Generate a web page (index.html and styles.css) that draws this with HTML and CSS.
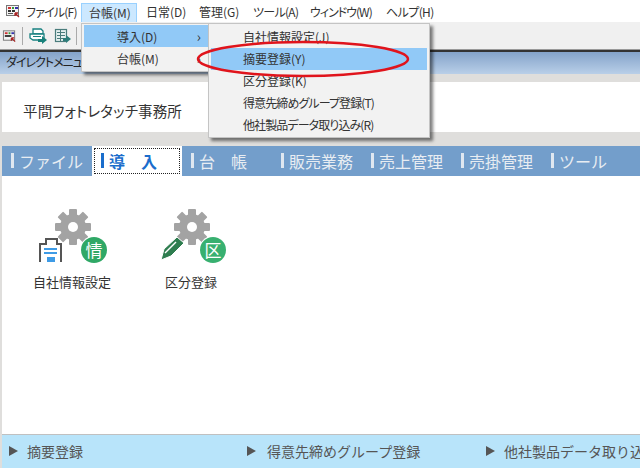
FILE: index.html
```html
<!DOCTYPE html>
<html lang="ja">
<head>
    <meta charset="UTF-8">
    <title>導入</title>
    <link rel="stylesheet" href="styles.css">
</head>
<body>
    <div class="app">
        <!-- Menu bar -->
        <div class="menubar">
            <svg class="app-icon" width="16" height="14" viewBox="0 0 16 14">
                <rect x="1.500" y="1.500" width="12" height="10" fill="#f4f4f4" stroke="#777"/>
                <rect x="3" y="3" width="3" height="2" fill="#c33"/>
                <rect x="7" y="3" width="2" height="2" fill="#393"/>
                <rect x="10" y="3" width="3" height="2" fill="#33a"/>
                <rect x="3" y="6" width="3" height="2" fill="#333"/>
                <rect x="7" y="6" width="3" height="2" fill="#333"/>
                <rect x="3" y="9" width="5" height="1" fill="#555"/>
                <path d="M10 9l4 4M10 9h3M10 9v3" stroke="#a22" stroke-width="1.300" fill="none"/>
            </svg>
            <span class="menu-item m-file">ファイル(F)</span>
            <span class="menu-item m-daicho">台帳(M)</span>
            <span class="menu-item m-nichijo">日常(D)</span>
            <span class="menu-item m-kanri">管理(G)</span>
            <span class="menu-item m-tool">ツール(A)</span>
            <span class="menu-item m-window">ウィンドウ(W)</span>
            <span class="menu-item m-help">ヘルプ(H)</span>
        </div>

        <!-- Toolbar -->
        <div class="toolbar">
            <svg class="tool-icon first" width="15" height="14" viewBox="0 0 16 14">
                <rect x="1.500" y="1.500" width="12" height="10" fill="#f4f4f4" stroke="#777"/>
                <rect x="3" y="3" width="3" height="2" fill="#c33"/>
                <rect x="7" y="3" width="2" height="2" fill="#393"/>
                <rect x="10" y="3" width="3" height="2" fill="#33a"/>
                <rect x="3" y="6" width="7" height="2" fill="#333"/>
                <path d="M10 9l4 4M10 9h3M10 9v3" stroke="#a22" stroke-width="1.300" fill="none"/>
            </svg>
            <span class="tool-sep"></span>
            <svg class="tool-icon second" width="18" height="16" viewBox="0 0 18 16">
                <path d="M4 1h8l2 2v3H4z" fill="#fff" stroke="#178080" stroke-width="1.300"/>
                <path d="M1 6h14v6H4l-3-2z" fill="#fff" stroke="#178080" stroke-width="1.300"/>
                <path d="M4 8.500h8" stroke="#178080"/>
                <path d="M9 11h4V8l5 4-5 4v-2H9z" fill="#17807a"/>
            </svg>
            <svg class="tool-icon third" width="17" height="16" viewBox="0 0 17 16">
                <rect x="1.500" y="1.500" width="11" height="12" fill="#e4efef" stroke="#4a7c7c" stroke-width="1.200"/>
                <path d="M3 4.500h8M3 7.500h8M3 10.500h8M6.500 2v11" stroke="#4a7c7c"/>
                <path d="M9 10h3V7l5 4-5 4v-2H9z" fill="#2d7d7a"/>
            </svg>
            <span class="tool-sep"></span>
        </div>

        <div class="direct-bar">ダイレクトメニュー</div>

        <div class="company">平間フォトレタッチ事務所</div>

        <!-- Tabs -->
        <div class="tabs">
            <span class="tab">ファイル</span>
            <span class="tab active">導　入</span>
            <span class="tab">台　帳</span>
            <span class="tab">販売業務</span>
            <span class="tab">売上管理</span>
            <span class="tab">売掛管理</span>
            <span class="tab">ツール</span>
        </div>

        <!-- Shortcut icons -->
        <div class="content">
            <div class="shortcut">
                <div class="shortcut-icon">
                    <svg width="84" height="60" viewBox="0 0 84 60">
                        <use href="#gear"/>
                        <path d="M10 57V39h6v-5h11v5h4v18" fill="#fff" stroke="#555" stroke-width="2"/>
                        <path d="M14 44h13M14 48h13" stroke="#3e9be6" stroke-width="2"/>
                        <rect x="17" y="52" width="8" height="5" fill="#3e9be6"/>
                        <circle cx="64" cy="45" r="14" fill="#fff"/>
                        <circle cx="64" cy="45" r="13" fill="#2fa866"/>
                    </svg>
                    <span class="badge">情</span>
                </div>
                <div class="shortcut-label">自社情報設定</div>
            </div>
            <div class="shortcut second">
                <div class="shortcut-icon">
                    <svg width="84" height="60" viewBox="0 0 84 60">
                        <use href="#gear"/>
                        <path d="M12 55l3-11 13-12 7 6-13 13z" fill="#2e7d4f" stroke="#fff"/>
                        <path d="M16 48l11-11" stroke="#fff" stroke-width="1.500" fill="none"/>
                        <circle cx="64" cy="45" r="14" fill="#fff"/>
                        <circle cx="64" cy="45" r="13" fill="#38b070"/>
                    </svg>
                    <span class="badge">区</span>
                </div>
                <div class="shortcut-label">区分登録</div>
            </div>
        </div>

        <!-- Footer links -->
        <div class="footer">
            <div class="foot-link f1"><span class="arrow"></span>摘要登録</div>
            <div class="foot-link f2"><span class="arrow"></span>得意先締めグループ登録</div>
            <div class="foot-link f3"><span class="arrow"></span>他社製品データ取り込み</div>
        </div>
    </div>

    <svg width="0" height="0" class="defs">
        <defs>
            <g id="gear" fill="#a3a3a3">
                <circle cx="43" cy="22" r="13"/>
                <rect x="39" y="4" width="8" height="36" rx="1"/>
                <rect x="39" y="4" width="8" height="36" rx="1" transform="rotate(45 43 22)"/>
                <rect x="39" y="4" width="8" height="36" rx="1" transform="rotate(90 43 22)"/>
                <rect x="39" y="4" width="8" height="36" rx="1" transform="rotate(135 43 22)"/>
                <circle cx="43" cy="22" r="5" fill="#fff"/>
            </g>
        </defs>
    </svg>

    <!-- Open menus -->
    <div class="dropdown first-menu">
        <div class="drop-row selected">導入(D)<span class="chev">&#8250;</span></div>
        <div class="drop-row">台帳(M)<span class="chev">&#8250;</span></div>
    </div>
    <div class="dropdown sub-menu">
        <div class="sub-row">自社情報設定(J)</div>
        <div class="sub-row selected">摘要登録(Y)</div>
        <div class="sub-row">区分登録(K)</div>
        <div class="sub-row tight">得意先締めグループ登録(T)</div>
        <div class="sub-row tight">他社製品データ取り込み(R)</div>
    </div>
    <svg class="red-ring" width="216" height="40" viewBox="0 0 216 40">
        <ellipse cx="108" cy="20" rx="105" ry="17" fill="none" stroke="#e0141c" stroke-width="2.500"/>
    </svg>
</body>
</html>
```

FILE: styles.css
```css
html, body {
    margin: 0;
    padding: 0;
}

body {
    width: 640px;
    height: 468px;
    overflow: hidden;
    position: relative;
    font-family: "Noto Sans CJK JP", sans-serif;
    background-color: #dfdedc;
}

.app {
    display: flex;
    flex-direction: column;
    height: 468px;
}

.defs {
    position: absolute;
}

.menubar {
    height: 22px;
    background-color: #fff;
    display: flex;
    align-items: center;
    font-size: 12px;
    font-feature-settings: "palt";
    color: #333;
    padding-left: 5px;
}

.app-icon {
    margin-right: 5px;
    flex: none;
}

.menu-item {
    white-space: nowrap;
    flex: none;
    line-height: 22px;
    padding-top: 2px;
}

.m-file { width: 55px; letter-spacing: -0.8px; }
.m-daicho {
    width: 56px;
    height: 20px;
    line-height: 18px;
    box-sizing: border-box;
    padding: 0 0 0 7px;
    margin-top: 3px;
    margin-right: 9px;
    background-color: #cce8ff;
    border: 1px solid #99d1ff;
    border-bottom: none;
}
.m-nichijo { width: 53px; }
.m-kanri { width: 54px; }
.m-tool { width: 57px; letter-spacing: -0.7px; }
.m-window { width: 76px; letter-spacing: -1px; }
.m-help { letter-spacing: -0.6px; }

.toolbar {
    height: 27px;
    background-color: #f0f0f0;
    display: flex;
    align-items: center;
}

.tool-icon {
    flex: none;
}

.tool-icon.first {
    margin-left: 2px;
}

.tool-icon.second {
    margin-left: 6px;
}

.tool-icon.third {
    margin-left: 7px;
}

.tool-sep {
    width: 1px;
    height: 18px;
    margin-left: 5px;
    background-color: #aaa;
    flex: none;
}

.direct-bar {
    height: 22px;
    line-height: 20px;
    border-top: 1px solid #999;
    box-shadow: inset 0 2px 0 #333;
    background: linear-gradient(#7f9fc7, #b9cfe8);
    padding-top: 2px;
    color: #222;
    font-size: 12px;
    font-feature-settings: "palt";
    letter-spacing: -1px;
    padding-left: 6px;
}

.company {
    height: 50px;
    line-height: 58px;
    margin: 8px 0 14px 2px;
    background-color: #fff;
    font-size: 14.500px;
    font-feature-settings: "palt";
    letter-spacing: 0.15px;
    color: #333;
    padding-left: 21px;
}

.tabs {
    height: 30px;
    margin-left: 2px;
    background-color: #739ecb;
    display: flex;
    color: #e8edf2;
    font-size: 16px;
}

.tab {
    width: 90px;
    height: 30px;
    line-height: 30px;
    padding-left: 17px;
    box-sizing: border-box;
    white-space: nowrap;
    position: relative;
    flex: none;
}

.tab::before {
    content: "";
    position: absolute;
    left: 9px;
    top: 7px;
    height: 15px;
    width: 3px;
    background-color: #dfe7f0;
}

.tab.active {
    background-color: #fff;
    color: #1a6dcc;
    font-weight: bold;
    outline: 1px dotted #222;
    outline-offset: -3px;
}

.tab.active::before {
    background-color: #1a6dcc;
}

.content {
    flex: 1;
    margin-left: 2px;
    background-color: #fff;
    border-bottom: 1px solid #c0c0c0;
    display: flex;
    padding: 29px 0 0 28px;
}

.shortcut {
    width: 84px;
    text-align: center;
}

.shortcut.second {
    margin-left: 35px;
}

.shortcut-icon {
    position: relative;
    height: 60px;
}

.badge {
    position: absolute;
    left: 51px;
    top: 32px;
    width: 26px;
    height: 26px;
    line-height: 25px;
    text-align: center;
    color: #fff;
    font-size: 17px;
}

.shortcut-label {
    margin-top: 7px;
    font-size: 13px;
    line-height: 19px;
    color: #333;
}

.footer {
    height: 33px;
    padding-bottom: 2px;
    box-sizing: border-box;
    margin-left: 2px;
    background-color: #b8e4fa;
    display: flex;
    align-items: center;
    font-size: 14px;
    color: #555;
    overflow: hidden;
}

.foot-link {
    flex: none;
    display: flex;
    align-items: center;
    white-space: nowrap;
}

.f1 { width: 231px; padding-left: 7px; }
.f2 { width: 232px; padding-left: 7px; }
.f2 .arrow { margin-right: 11px; }
.f3 { padding-left: 7px; }

.arrow {
    width: 0;
    height: 0;
    border-left: 9px solid #555;
    border-top: 5px solid transparent;
    border-bottom: 5px solid transparent;
    margin-right: 9px;
}

.dropdown {
    position: absolute;
    background-color: #f2f2f2;
    border: 1px solid #c4c4c4;
    box-shadow: 3px 3px 3px rgba(0, 0, 0, 0.5);
    font-size: 12px;
    font-feature-settings: "palt";
    color: #333;
    box-sizing: border-box;
}

.first-menu {
    left: 81px;
    top: 23px;
    width: 130px;
    height: 49px;
    padding: 1px 2px;
}

.drop-row {
    height: 22px;
    line-height: 24px;
    padding-left: 33px;
    position: relative;
}

.chev {
    position: absolute;
    right: 7px;
    top: -1px;
    font-size: 14px;
}

.sub-menu {
    left: 208px;
    top: 23px;
    width: 222px;
    height: 115px;
    padding: 2px;
}

.sub-row {
    height: 22px;
    line-height: 22px;
    padding-left: 32px;
}

.sub-row.tight {
    letter-spacing: -0.9px;
}

.selected {
    background-color: #91c9f7;
}

.red-ring {
    position: absolute;
    left: 195px;
    top: 39px;
}
```
